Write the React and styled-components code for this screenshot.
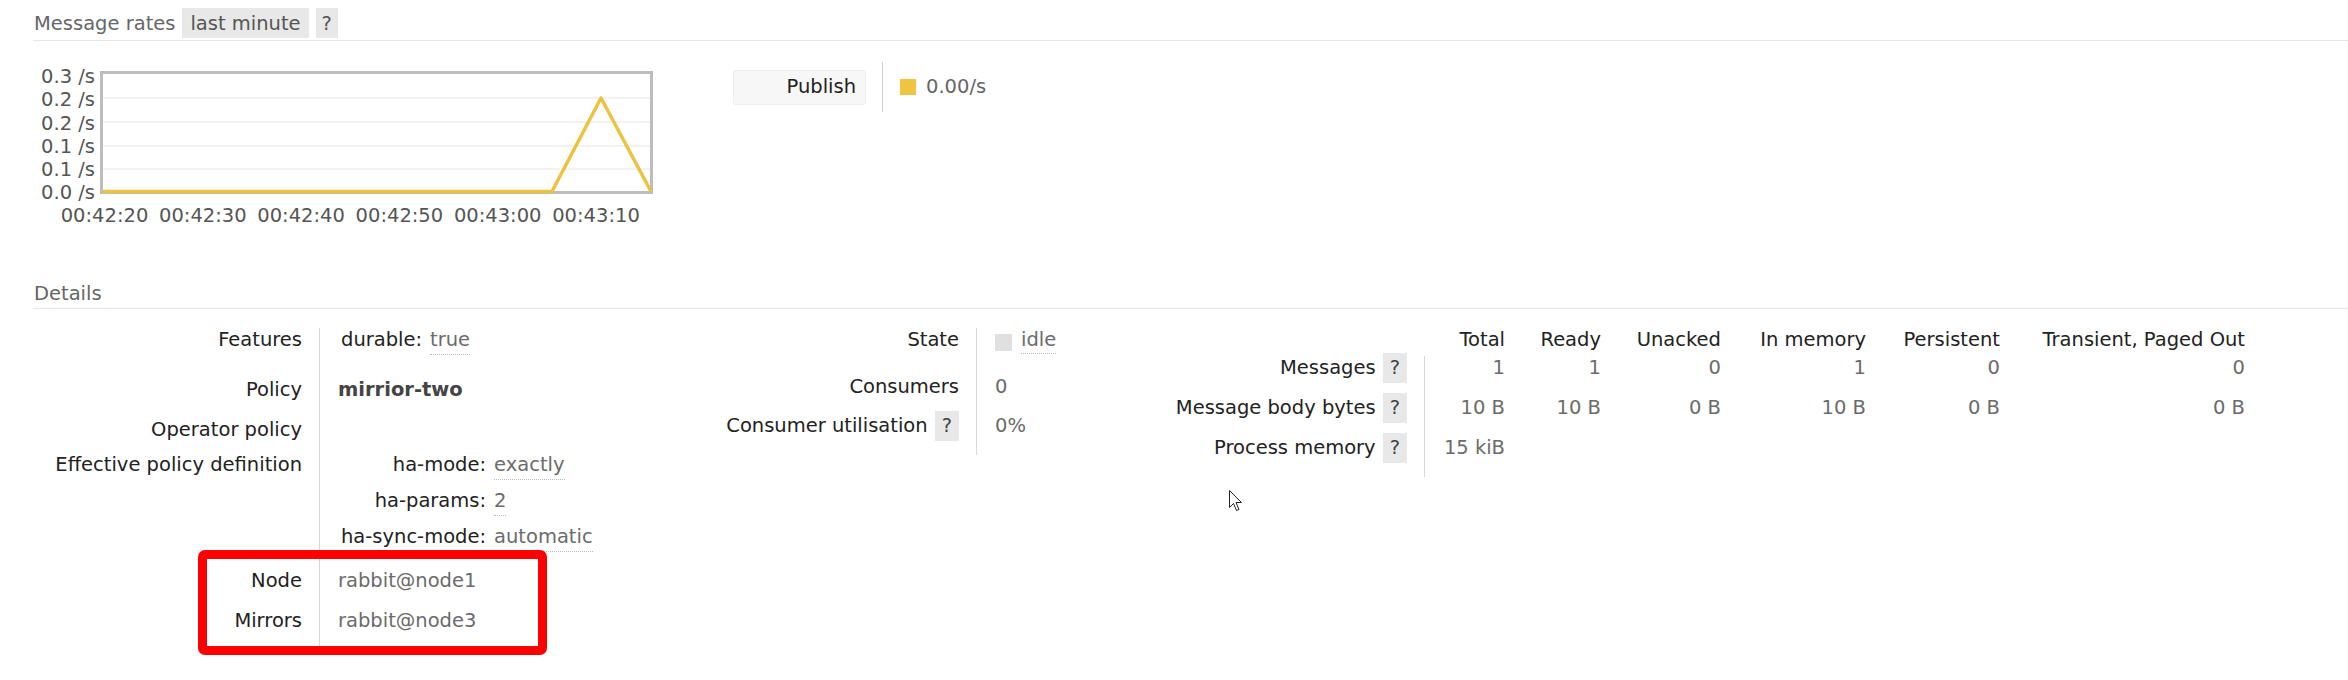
import React from "react";
import styled, { createGlobalStyle } from "styled-components";

const Global = createGlobalStyle`
  html, body { margin: 0; padding: 0; background: #fff; }
  body {
    font-family: "DejaVu Sans", Verdana, sans-serif;
    font-size: 19.5px;
    line-height: 24px;
    color: #222;
  }
`;

const Page = styled.div`
  position: relative;
  padding-left: 33px;
  min-height: 680px;
  box-sizing: border-box;
`;

const Heading = styled.h2`
  margin: ${(p) => p.$mt || 0}px 0 0;
  padding: 8px 0 2px 1px;
  font-size: 19.5px;
  font-weight: normal;
  line-height: 24px;
  color: #666;
  border-bottom: 1px solid #e6e6e6;
`;

const Pill = styled.span`
  display: inline-block;
  margin-left: 7px;
  padding: 4px ${(p) => p.$px || 8}px 2px;
  background: #e8e8e8;
  color: #555;
  line-height: 24px;
`;

const RatesRow = styled.div`
  display: flex;
  align-items: flex-start;
  margin-top: 19px;
`;

const ChartSvg = styled.svg`
  display: block;
  flex: none;
`;

const Legend = styled.div`
  display: flex;
  align-items: center;
  height: 50px;
  margin: 2px 0 0 40px;
`;

const SeriesButton = styled.div`
  width: 133px;
  height: 35px;
  box-sizing: border-box;
  padding-right: 9px;
  display: flex;
  align-items: center;
  justify-content: flex-end;
  background: #f7f7f7;
  border: 1px solid #ededed;
  border-radius: 3px;
  color: #222;
`;

const VSep = styled.div`
  width: 1px;
  align-self: stretch;
  background: #d0d0d0;
  margin: 0 17px 0 16px;
`;

const Swatch = styled.span`
  display: inline-block;
  width: ${(p) => p.$s || 16}px;
  height: ${(p) => p.$s || 16}px;
  background: ${(p) => p.$c};
  margin-right: ${(p) => p.$mr || 10}px;
  vertical-align: ${(p) => p.$va || 0}px;
`;

const Rate = styled.span`
  color: #666;
`;

const Details = styled.div`
  display: flex;
  align-items: flex-start;
  margin-top: 19px;
`;

const Table = styled.div`
  --lw: ${(p) => p.$lw}px;
  width: ${(p) => (p.$w ? `${p.$w}px` : "auto")};
  flex: none;
`;

const Row = styled.div`
  display: flex;
  height: ${(p) => p.$h}px;
`;

const Label = styled.div`
  width: var(--lw);
  flex: none;
  box-sizing: border-box;
  padding-right: 17px;
  text-align: right;
  color: #222;
  white-space: nowrap;
`;

const Value = styled.div`
  border-left: 1px solid #d6d6d6;
  padding-left: 18px;
  color: #6b6b6b;
  white-space: nowrap;
`;

const Bold = styled.span`
  font-weight: bold;
  color: #444;
`;

const KV = styled.div`
  display: grid;
  grid-template-columns: auto auto;
  column-gap: 8px;
  row-gap: ${(p) => p.$gap || 0}px;
  justify-content: start;
  margin-left: 3px;
`;

const Key = styled.span`
  text-align: right;
  color: #222;
`;

const Abbr = styled.span`
  justify-self: start;
  color: #6b6b6b;
  padding-bottom: 2px;
  border-bottom: 1px dotted #bbb;
`;

const Help = styled.span`
  display: inline-block;
  margin: -3px 0 -3px 7px;
  padding: 3px 7px;
  background: #e8e8e8;
  color: #444;
  line-height: 24px;
`;

const Highlight = styled.div`
  position: relative;
`;

const Frame = styled.div`
  position: absolute;
  left: 165px;
  top: -19px;
  width: 349px;
  height: 105px;
  box-sizing: border-box;
  border: 9px solid #ff0000;
  border-radius: 7px;
  pointer-events: none;
`;

const Cell = styled.div`
  width: ${(p) => p.$w}px;
  flex: none;
  box-sizing: border-box;
  text-align: right;
  white-space: nowrap;
  color: ${(p) => (p.$head ? "#222" : "#6b6b6b")};
  border-left: ${(p) => (p.$sep ? "1px solid #d6d6d6" : "none")};
`;

const Cursor = styled.svg`
  position: absolute;
  left: 1229px;
  top: 490px;
`;

const yLabels = [
  ["0.3 /s", 83],
  ["0.2 /s", 106],
  ["0.2 /s", 129.5],
  ["0.1 /s", 153],
  ["0.1 /s", 176],
  ["0.0 /s", 199],
];
const xLabels = ["00:42:20", "00:42:30", "00:42:40", "00:42:50", "00:43:00", "00:43:10"];

const Chart = () => (
  <ChartSvg width="660" height="180" viewBox="33 60 660 180">
    {[98, 122, 146, 169].map((y) => (
      <line key={y} x1="103" x2="651" y1={y} y2={y} stroke="#eeeeee" strokeWidth="1.5" />
    ))}
    <rect x="101.5" y="72.5" width="550" height="120" fill="none" stroke="#bdbdbd" strokeWidth="3" />
    <polyline
      points="103,191.5 552,191.5 601,98 651,191.5"
      fill="none"
      stroke="#edc240"
      strokeWidth="3.5"
      strokeLinejoin="round"
    />
    {yLabels.map(([t, y], i) => (
      <text key={i} x="95" y={y} textAnchor="end" fontFamily="DejaVu Sans, Verdana, sans-serif" fontSize="19.5" fill="#555">
        {t}
      </text>
    ))}
    {xLabels.map((t, i) => (
      <text key={t} x={104.5 + 98.3 * i} y="222" textAnchor="middle" fontFamily="DejaVu Sans, Verdana, sans-serif" fontSize="19.5" fill="#555">
        {t}
      </text>
    ))}
  </ChartSvg>
);

const colWidths = [81, 96, 120, 145, 134, 245];
const heads = ["Total", "Ready", "Unacked", "In memory", "Persistent", "Transient, Paged Out"];
const msgRows = [
  { label: "Messages", h: 40, vals: ["1", "1", "0", "1", "0", "0"] },
  { label: "Message body bytes", h: 40, vals: ["10 B", "10 B", "0 B", "10 B", "0 B", "0 B"] },
  { label: "Process memory", h: 41, vals: ["15 kiB", "", "", "", "", ""] },
];

export default function App() {
  return (
    <>
      <Global />
      <Page>
        <Heading>
          Message rates<Pill>last minute</Pill>
          <Pill $px={6}>?</Pill>
        </Heading>

        <RatesRow>
          <Chart />
          <Legend>
            <SeriesButton>Publish</SeriesButton>
            <VSep />
            <Swatch $c="#f0c340" />
            <Rate>0.00/s</Rate>
          </Legend>
        </RatesRow>

        <Heading $mt={34}>Details</Heading>

        <Details>
          <Table $lw={286} $w={667}>
            <Row $h={50}>
              <Label>Features</Label>
              <Value>
                <KV>
                  <Key>durable:</Key>
                  <Abbr>true</Abbr>
                </KV>
              </Value>
            </Row>
            <Row $h={40}>
              <Label>Policy</Label>
              <Value>
                <Bold>mirrior-two</Bold>
              </Value>
            </Row>
            <Row $h={35}>
              <Label>Operator policy</Label>
              <Value />
            </Row>
            <Row $h={116}>
              <Label>Effective policy definition</Label>
              <Value>
                <KV $gap={9}>
                  <Key>ha-mode:</Key>
                  <Abbr>exactly</Abbr>
                  <Key>ha-params:</Key>
                  <Abbr>2</Abbr>
                  <Key>ha-sync-mode:</Key>
                  <Abbr>automatic</Abbr>
                </KV>
              </Value>
            </Row>
            <Highlight>
              <Row $h={40}>
                <Label>Node</Label>
                <Value>rabbit@node1</Value>
              </Row>
              <Row $h={38}>
                <Label>Mirrors</Label>
                <Value>rabbit@node3</Value>
              </Row>
              <Frame />
            </Highlight>
          </Table>

          <Table $lw={276} $w={450}>
            <Row $h={47}>
              <Label>State</Label>
              <Value>
                <Swatch $c="#e0e0e0" $s={17} $mr={9} $va={-5} />
                <Abbr>idle</Abbr>
              </Value>
            </Row>
            <Row $h={39}>
              <Label>Consumers</Label>
              <Value>0</Value>
            </Row>
            <Row $h={41}>
              <Label>
                Consumer utilisation<Help>?</Help>
              </Label>
              <Value>0%</Value>
            </Row>
          </Table>

          <Table $lw={274}>
            <Row $h={28}>
              <Label />
              {heads.map((h, i) => (
                <Cell key={h} $w={colWidths[i]} $head>
                  {h}
                </Cell>
              ))}
            </Row>
            {msgRows.map((r) => (
              <Row key={r.label} $h={r.h}>
                <Label>
                  {r.label}
                  <Help>?</Help>
                </Label>
                {r.vals.map((v, i) => (
                  <Cell key={i} $w={colWidths[i]} $sep={i === 0}>
                    {v}
                  </Cell>
                ))}
              </Row>
            ))}
          </Table>
        </Details>

        <Cursor width="14" height="23" viewBox="0 0 14 23">
          <path
            d="M0.5 0.5 L0.5 17.5 L4.5 13.5 L7.5 20.5 L10 19.5 L7 12.5 L12.5 12.5 Z"
            fill="#fff"
            stroke="#222"
            strokeWidth="1"
            strokeLinejoin="miter"
          />
        </Cursor>
      </Page>
    </>
  );
}
